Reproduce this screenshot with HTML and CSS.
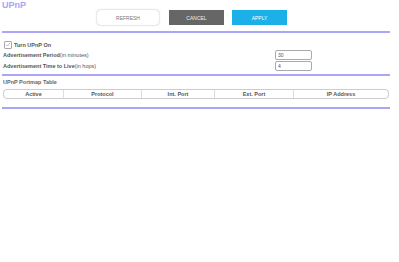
FILE: index.html
```html
<!DOCTYPE html>
<html lang="en">
<head>
    <meta charset="UTF-8">
    <title>UPnP</title>
    <link rel="stylesheet" href="styles.css">
</head>
<body>
    <div class="page">
        <h1 class="title">UPnP</h1>

        <div class="buttons">
            <button class="btn btn-refresh">REFRESH</button>
            <button class="btn btn-cancel">CANCEL</button>
            <button class="btn btn-apply">APPLY</button>
        </div>

        <hr class="rule">

        <div class="settings">
            <label class="check-row">
                <span class="checkbox">
                    <svg viewBox="0 0 8 8" width="7" height="7"><path d="M1.5 4.2 L3.3 6 L6.6 1.8" fill="none" stroke="#999" stroke-width="0.9"/></svg>
                </span>
                <b>Turn UPnP On</b>
            </label>
            <div class="field-row">
                <span><b>Advertisement Period</b><span class="hint">(in minutes)</span></span>
                <input class="field" type="text" value="30">
            </div>
            <div class="field-row">
                <span><b>Advertisement Time to Live</b><span class="hint">(in hops)</span></span>
                <input class="field" type="text" value="4">
            </div>
        </div>

        <hr class="rule">

        <h2 class="table-title">UPnP Portmap Table</h2>
        <div class="portmap">
            <div class="col col-active">Active</div>
            <div class="col col-protocol">Protocol</div>
            <div class="col col-int">Int. Port</div>
            <div class="col col-ext">Ext. Port</div>
            <div class="col col-ip">IP Address</div>
        </div>

        <hr class="rule">
    </div>
</body>
</html>
```

FILE: styles.css
```css
body {
    margin: 0;
    background: #fff;
    font-family: 'Liberation Sans', Arial, sans-serif;
    color: #555;
}

.page {
    width: 388px;
    padding: 0 0 0 2px;
}

.title {
    margin: 0;
    height: 9px;
    padding-top: 1px;
    font-size: 9px;
    line-height: 9px;
    font-weight: bold;
    color: #a8a4f7;
}

.buttons {
    display: flex;
    justify-content: flex-start;
    gap: 9px;
    padding-left: 95px;
    height: 15px;
    margin-bottom: 6px;
}

.btn {
    height: 15px;
    padding: 0;
    border: none;
    font-family: inherit;
    font-size: 5px;
    color: #fff;
    cursor: pointer;
}

.btn-refresh {
    width: 62px;
    background: #fff;
    color: #777;
    border-radius: 4px;
    box-shadow: 0 0 2px rgba(0,0,0,0.35);
    margin-right: 1px;
}

.btn-cancel {
    width: 55px;
    background: #666;
    color: #eee;
}

.btn-apply {
    width: 55px;
    margin-left: -1px;
    background: #1cb0e8;
}

.rule {
    margin: 0;
    border: none;
    height: 2px;
    background: #aaa6f7;
}

.settings {
    padding: 7px 0 3px 0;
    font-size: 5.5px;
}

.check-row {
    display: flex;
    align-items: center;
    gap: 2px;
    height: 9px;
    padding-left: 2px;
}

.checkbox {
    display: flex;
    align-items: center;
    justify-content: center;
    width: 6px;
    height: 6px;
    border: 1px solid #aaa;
    border-radius: 1px;
}

.field-row {
    display: flex;
    justify-content: space-between;
    align-items: center;
    width: 309px;
    height: 11px;
    padding-left: 1px;
}

.hint {
    font-weight: normal;
}

.field {
    box-sizing: border-box;
    width: 37px;
    height: 10px;
    padding: 0 2px;
    border: 1px solid #aaa;
    border-radius: 2px;
    font-family: inherit;
    font-size: 5px;
    color: #555;
}

.table-title {
    margin: 0;
    padding: 3px 0 0 1px;
    height: 10px;
    line-height: 7px;
    font-size: 5.5px;
    font-weight: bold;
    color: #666;
}

.portmap {
    display: grid;
    grid-template-columns: 59px 78px 73px 79px 1fr;
    height: 8px;
    margin: 0 1px 8px 1px;
    border: 1px solid #ccc;
    border-radius: 4px;
    font-size: 5.5px;
    font-weight: bold;
    color: #555;
}

.col {
    display: flex;
    align-items: center;
    justify-content: center;
    border-left: 1px solid #ddd;
}

.col-active {
    border-left: none;
}
```
